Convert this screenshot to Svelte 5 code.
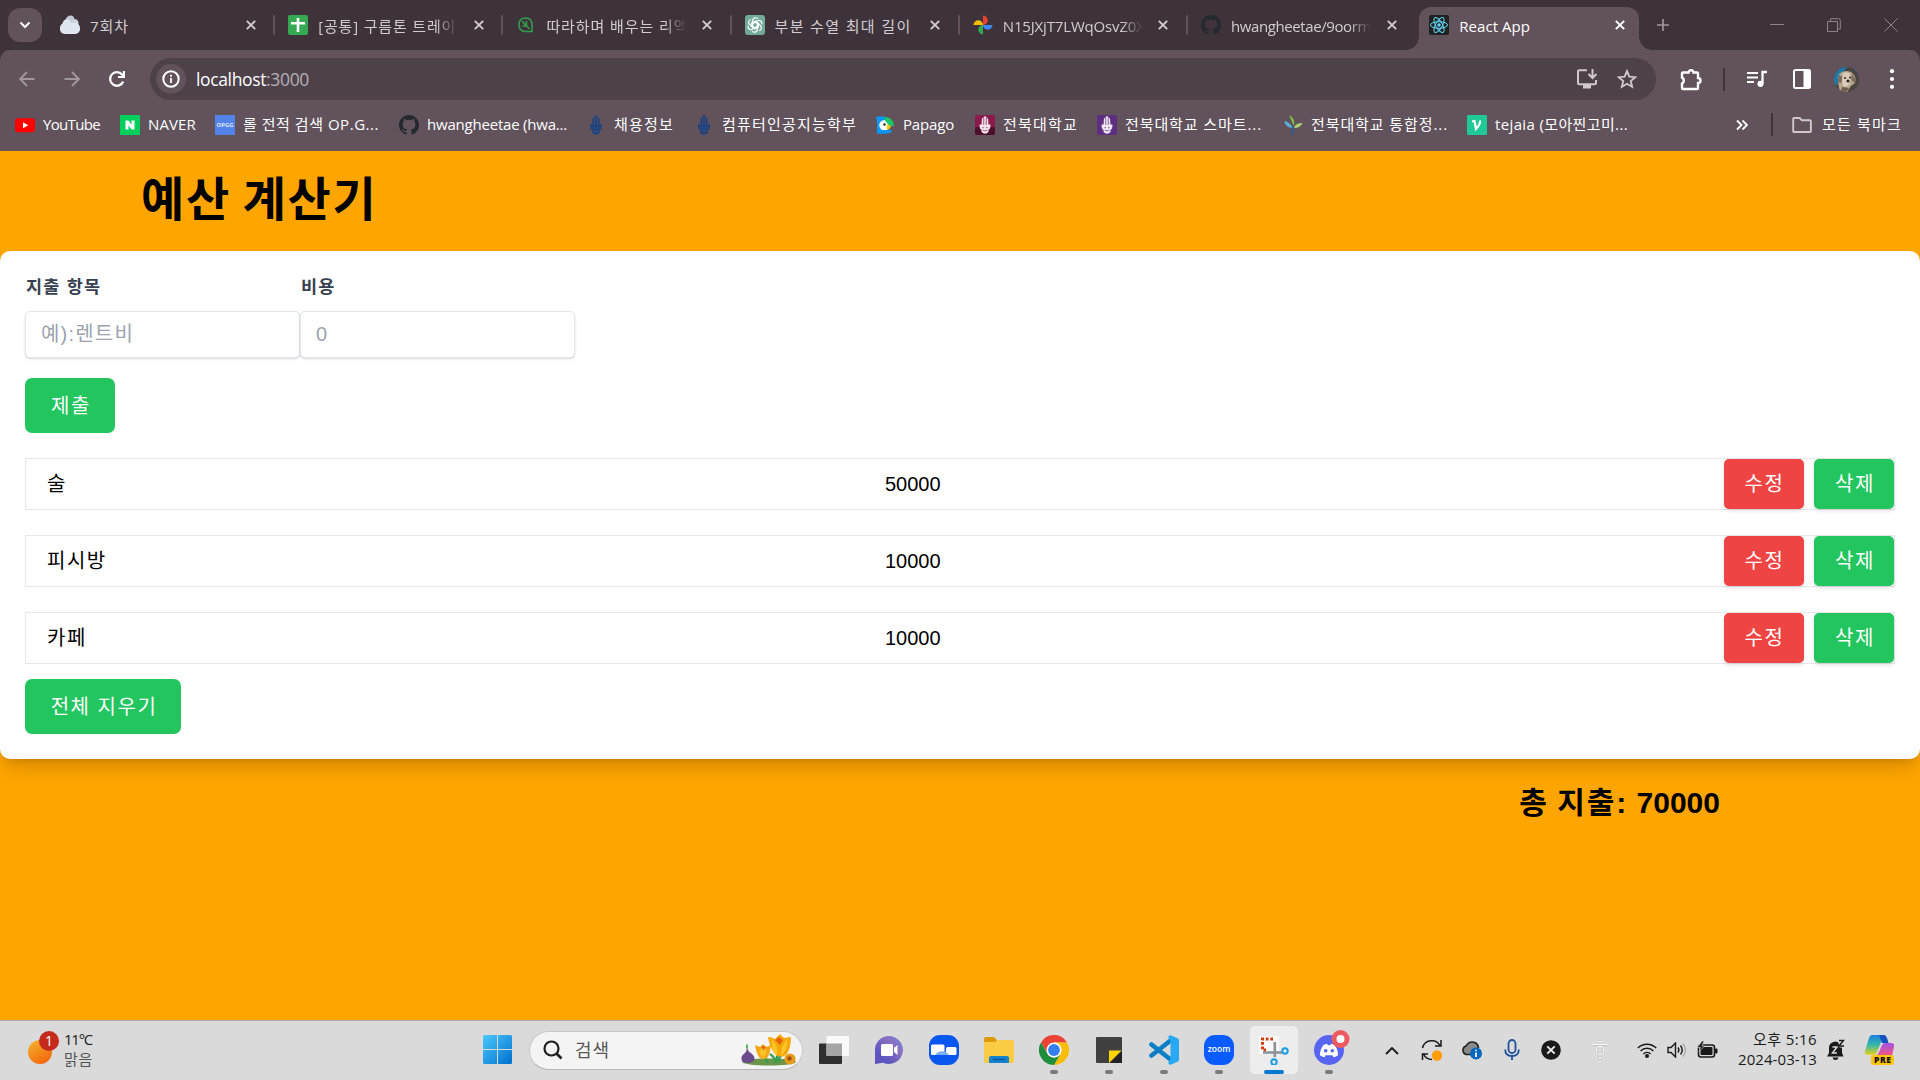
<script>
  // Spreads the tracking of a label so that it fills its slot exactly.
  function fit(node, width) {
    if (!width) return;
    const chars = [...node.textContent.trim()].length;
    if (chars < 2) return;
    const natural = node.getBoundingClientRect().width;
    node.style.letterSpacing = `${(width - natural) / chars}px`;
  }

  const tabs = [
    { icon: 'cloud', title: '7회차', w: 39 },
    { icon: 'sheet', title: '[공통] 구름톤 트레이', w: 138, fade: true },
    { icon: 'leaf', title: '따라하며 배우는 리액', w: 142, fade: true },
    { icon: 'gpt', title: '부분 수열 최대 길이', w: 137 },
    { icon: 'photos', title: 'N15JXjT7LWqOsvZ0X', w: 142, fade: true },
    { icon: 'github', title: 'hwangheetae/9oorm', w: 140, fade: true },
    { icon: 'react', title: 'React App', w: 71, active: true }
  ];

  const bookmarks = [
    { icon: 'youtube', label: 'YouTube', w: 57, slot: 105 },
    { icon: 'naver', label: 'NAVER', w: 48, slot: 95 },
    { icon: 'opgg', label: '롤 전적 검색 OP.G...', w: 136, slot: 184 },
    { icon: 'github', label: 'hwangheetae (hwa...', w: 140, slot: 187 },
    { icon: 'crest', label: '채용정보', w: 60, slot: 108 },
    { icon: 'crest', label: '컴퓨터인공지능학부', w: 135, slot: 181 },
    { icon: 'papago', label: 'Papago', w: 51, slot: 100 },
    { icon: 'crestRed', label: '전북대학교', w: 75, slot: 122 },
    { icon: 'crestPurple', label: '전북대학교 스마트...', w: 137, slot: 186 },
    { icon: 'sprout', label: '전북대학교 통합정...', w: 137, slot: 184 },
    { icon: 'vel', label: 'tejaia (모아찐고미...', w: 133, slot: 185 }
  ];

  const expenses = [
    { name: '술', cost: 50000 },
    { name: '피시방', cost: 10000 },
    { name: '카페', cost: 10000 }
  ];
  const total = expenses.reduce((sum, e) => sum + e.cost, 0);

  const apps = [
    { icon: 'taskview' },
    { icon: 'chat' },
    { icon: 'meet' },
    { icon: 'folder' },
    { icon: 'chrome', open: true },
    { icon: 'sticky', open: true },
    { icon: 'vscode', open: true },
    { icon: 'zoom', open: true },
    { icon: 'snip', active: true },
    { icon: 'discord', open: true }
  ];
</script>

{#snippet crestShape(color, line)}
  <path fill={color} d="M6.200 10 6.500 3.500Q7 1.800 8.600 1.800V1Q9.300 0 10 .3 10.700 0 11.400 1v.8Q13 1.800 13.500 3.500L13.800 10ZM4 9.500h12v3l-.8.800.4 1.200-1.600.6-.2 2.600q-1.800 2-3.800 2t-3.800-2l-.2-2.600-1.600-.6.4-1.200-.8-.8Z" />
  <path d="M8.600 2v8M11.400 2v8M7 13h2M11 13h2M7.500 15.800q2.500 1.600 5 0" fill="none" stroke={line} stroke-width=".8" />
{/snippet}

{#snippet icon(name)}
  {#if name === 'cloud'}
    <svg width="20" height="20" viewBox="0 0 20 20"><path fill="#cfd6dd" d="M4 11a4 4 0 0 1 1-6 5 5 0 0 1 9-1A4 4 0 0 1 18 10Z" /><circle cx="10.500" cy="4.200" r="3.800" fill="#c3ccd4" /><rect x="0" y="8" width="20" height="11" rx="4.700" fill="#dfe6ee" /><circle cx="7" cy="9" r="4.500" fill="#dfe6ee" /></svg>
  {:else if name === 'sheet'}
    <svg width="20" height="20" viewBox="0 0 20 20"><rect width="20" height="20" rx="2" fill="#34a853" /><path d="M10 3v14M3 8.300h14" stroke="#fff" stroke-width="2.600" /></svg>
  {:else if name === 'leaf'}
    <svg width="20" height="20" viewBox="0 0 20 20" fill="none" stroke="#31a24c" stroke-width="1.500"><path d="M9.500 3Q16 3 16 10v6.500H9.500Q3 16.500 3 9.800 3 3 9.500 3Z" /><path d="M6 6l7.500 8M10.500 6v5M6.500 11h4" /></svg>
  {:else if name === 'gpt'}
    <svg width="20" height="20" viewBox="0 0 20 20"><rect width="20" height="20" rx="3" fill="#74aa9c" /><g fill="none" stroke="#fff" stroke-width="1.200">{#each [0, 60, 120, 180, 240, 300] as a}<path transform="rotate({a} 10 10)" d="M10 7.300 13.200 9.100V13M7.700 8.600V5.400A2.900 2.900 0 0 1 12.800 3.800" />{/each}</g></svg>
  {:else if name === 'photos'}
    <svg width="20" height="20" viewBox="0 0 20 20"><path fill="#ea4335" d="M10 .5a4.700 4.700 0 0 1 0 9.500Z" /><path fill="#4285f4" d="M19.500 10a4.700 4.700 0 0 1-9.500 0Z" /><path fill="#34a853" d="M10 19.500a4.700 4.700 0 0 1 0-9.500Z" /><path fill="#fbbc04" d="M.5 10a4.700 4.700 0 0 1 9.500 0Z" /></svg>
  {:else if name === 'github'}
    <svg width="20" height="20" viewBox="0 0 16 16"><path fill="#24292f" d="M8 0C3.580 0 0 3.580 0 8c0 3.540 2.290 6.530 5.470 7.590.4.070.55-.17.55-.38 0-.19-.01-.82-.01-1.490-2.010.37-2.530-.49-2.690-.94-.09-.23-.48-.94-.82-1.130-.28-.15-.68-.52-.01-.53.63-.01 1.080.58 1.230.82.72 1.210 1.870.87 2.330.66.070-.52.280-.87.510-1.070-1.780-.2-3.640-.89-3.640-3.950 0-.87.310-1.590.82-2.150-.08-.2-.36-1.020.08-2.120 0 0 .67-.21 2.200.82a7.600 7.600 0 0 1 4 0c1.530-1.040 2.200-.82 2.200-.82.440 1.100.160 1.920.080 2.120.510.560.820 1.270.820 2.150 0 3.070-1.870 3.750-3.650 3.950.290.250.540.730.540 1.480 0 1.070-.01 1.930-.01 2.200 0 .210.150.460.550.380A8 8 0 0 0 8 0Z" /></svg>
  {:else if name === 'react'}
    <svg width="20" height="20" viewBox="0 0 20 20"><rect width="20" height="20" rx="2" fill="#222" /><g fill="none" stroke="#61dafb"><ellipse cx="10" cy="10" rx="8.500" ry="3.300" /><ellipse cx="10" cy="10" rx="8.500" ry="3.300" transform="rotate(60 10 10)" /><ellipse cx="10" cy="10" rx="8.500" ry="3.300" transform="rotate(120 10 10)" /></g><circle cx="10" cy="10" r="1.700" fill="#61dafb" /></svg>
  {:else if name === 'youtube'}
    <svg width="20" height="20" viewBox="0 0 20 20"><rect y="3.300" width="20" height="14" rx="3" fill="#f00" /><path fill="#fff" d="m8 7.300 5.200 3L8 13.300Z" /></svg>
  {:else if name === 'naver'}
    <svg width="20" height="20" viewBox="0 0 20 20"><rect width="20" height="20" fill="#03cf5d" /><path fill="#fff" d="M5.500 5.500h3l3 4.200V5.500h3v9h-3l-3-4.200v4.200h-3Z" /></svg>
  {:else if name === 'opgg'}
    <span class="opgg">OPGG</span>
  {:else if name === 'crest'}
    <svg width="20" height="20" viewBox="0 0 20 20">{@render crestShape('#1d4480', '#61525c')}</svg>
  {:else if name === 'crestRed'}
    <svg width="20" height="20" viewBox="0 0 20 20"><rect width="20" height="20" rx="2" fill="#8a1a4b" /><rect y="12" width="20" height="8" rx="2" fill="#4d0f2c" /><g transform="translate(1 1) scale(.9)">{@render crestShape('#f5e6ee', '#8a1a4b')}</g></svg>
  {:else if name === 'crestPurple'}
    <svg width="20" height="20" viewBox="0 0 20 20"><rect width="20" height="20" rx="2" fill="#5d2f80" /><g transform="translate(1 1) scale(.9)">{@render crestShape('#f0e8f5', '#5d2f80')}</g></svg>
  {:else if name === 'papago'}
    <svg width="20" height="20" viewBox="0 0 20 20"><path fill="#0a97f5" d="M1 1.500h8l2 1v16H2V6Z" /><path fill="#1fc76a" d="M9 2q9.500 0 10 9h-7Z" /><path fill="#fff" d="M9.500 5a5 5 0 0 0 0 10.500q5 0 4-5.500Z" /><path fill="#ffc400" d="m12 9.500 4 1.500q-.5 3-4 4Z" /><path fill="#0a97f5" d="M3 15h9q4-1 5 1-1 2.500-6 2.500H2Z" /><circle cx="9.500" cy="9.500" r="1.200" fill="#222" /></svg>
  {:else if name === 'sprout'}
    <svg width="20" height="20" viewBox="0 0 20 20"><path fill="#7fc241" d="M6 0q7 3.500 4.500 11Q9 6 6 0Z" /><path fill="#a7d36b" d="M19.500 8q-2 5-8.500 5 1-5 8.500-5Z" /><path fill="#58b3d6" d="M1 6q6 1 8.500 7Q3 13 1 6Z" /><path d="M10.200 11 9.500 19.500" stroke="#2a5f9c" stroke-width="1.800" /></svg>
  {:else if name === 'vel'}
    <svg width="20" height="20" viewBox="0 0 20 20"><rect width="20" height="20" rx="1" fill="#20c997" /><path d="M5 6.500 7.500 6 9 14q4.500-4.500 4-8.500" fill="none" stroke="#fff" stroke-width="2.200" /></svg>
  {:else if name === 'taskview'}
    <svg width="30" height="30" viewBox="0 0 30 30"><rect x="0" y="8.500" width="23" height="20.500" rx="1" fill="#2f2f2f" /><rect x="7.500" y="1" width="22.500" height="20" rx="1" fill="#fafafa" /><path fill="#a5a5a5" d="M7.500 8.500H23V21H7.500Z" /></svg>
  {:else if name === 'chat'}
    <svg width="30" height="30" viewBox="0 0 30 30"><defs><linearGradient id="chatg" x1="1" y1="0" x2="0" y2="1"><stop stop-color="#6f86dc" /><stop offset=".35" stop-color="#8b6fc0" /><stop offset=".7" stop-color="#5f58c0" /><stop offset="1" stop-color="#5b50b8" /></linearGradient></defs><path fill="url(#chatg)" d="M15 1a14 14 0 1 1-6 26.700L1 29V15A14 14 0 0 1 15 1Z" /><rect x="7" y="9" width="12" height="12" rx="1.500" fill="#fff" /><path fill="#fff" d="m20 13 3.500-3v10L20 17Z" /></svg>
  {:else if name === 'meet'}
    <svg width="30" height="30" viewBox="0 0 30 30"><rect width="30" height="30" rx="11" fill="#0a56f0" /><rect x="2" y="9.500" width="13.500" height="10.500" rx="1.500" fill="#fff" /><rect x="17" y="12" width="10.500" height="8" rx="1.500" fill="#fff" /><path fill="#7db0f5" d="M6 20a8 7.500 0 0 1 14 0Z" /></svg>
  {:else if name === 'folder'}
    <svg width="30" height="30" viewBox="0 0 30 30"><path fill="#dd9b0c" d="M0 4q0-2 2-2h8l3 3v5H0Z" /><path fill="#fccb45" d="M0 7h11l3-2h14q2 0 2 2v19q0 2-2 2H2q-2 0-2-2Z" /><path fill="#1683d0" d="M5 28v-5q0-2 2-2h16q2 0 2 2v5Z" /><path d="M9 24.500h12" stroke="#0b5596" stroke-width="1.400" /></svg>
  {:else if name === 'chrome'}
    <svg width="30" height="30" viewBox="0 0 30 30"><path fill="#ea4335" d="M2 7.500a15 15 0 0 1 26 0H15L9 19Z" /><path fill="#fbbc04" d="M28 7.500A15 15 0 0 1 15 30l6.500-11.300A7.500 7.500 0 0 0 15 7.500Z" /><path fill="#1e8e3e" d="M15 30A15 15 0 0 1 2 7.500l6.500 11.300A7.500 7.500 0 0 0 21.500 18.800Z" /><circle cx="15" cy="15" r="7.500" fill="#fff" /><circle cx="15" cy="15" r="5.900" fill="#347fee" /></svg>
  {:else if name === 'sticky'}
    <svg width="30" height="30" viewBox="0 0 30 30"><rect x="2" y="2" width="26" height="26" rx="1" fill="#404040" /><path fill="#ffd500" d="M15 28V15.500h12.500Z" /><path fill="#222" d="M28 16v12H16Z" /></svg>
  {:else if name === 'vscode'}
    <svg width="30" height="30" viewBox="0 0 30 30"><path d="m2.500 9.500 19 15M2.500 20.500l19-15" stroke="#0b7fc6" stroke-width="4.600" stroke-linecap="round" /><path fill="#29a9f2" d="m21 0 7.500 3.200q1.500.7 1.500 2.300v19q0 1.600-1.500 2.300L21 30l-2-2 2.500-4V6L19 2Z" /></svg>
  {:else if name === 'zoom'}
    <span class="zoom-app">zoom</span>
  {:else if name === 'snip'}
    <svg width="30" height="30" viewBox="0 0 30 30"><rect x="0" y="1" width="20" height="18" rx="1" fill="#fafafa" /><path d="M14 4H3.500v11H7" fill="none" stroke="#d63a0b" stroke-width="3" stroke-dasharray="2.700 1.800" /><path d="M15.800 7v15M4 17.500h19" stroke="#8b9199" stroke-width="2.600" /><g fill="none" stroke="#1b9de2" stroke-width="2"><circle cx="26" cy="16" r="2.700" /><circle cx="15" cy="27" r="2.700" /></g></svg>
  {:else if name === 'discord'}
    <svg class="discord" width="36" height="36" viewBox="0 0 36 36"><circle cx="15" cy="20" r="15" fill="#5865f2" /><path fill="#fff" d="M9.500 15q2-1 3.500-1.200l.8 1.400h2.400l.8-1.400q1.500.2 3.500 1.200 4 5.500 3.500 10.200-2 1.600-4.500 2l-1-1.900h-7l-1 1.900q-2.500-.4-4.500-2Q5.500 20.500 9.500 15Z" /><circle cx="11.700" cy="20.800" r="1.800" fill="#5865f2" /><circle cx="18.300" cy="20.800" r="1.800" fill="#5865f2" /><circle cx="26.500" cy="9" r="9" fill="#ed5a60" /><circle cx="26.500" cy="9" r="4" fill="#fff" /></svg>
  {/if}
{/snippet}

<div class="screen">
  <header class="strip">
    <button class="tab-search" aria-label="탭 검색"><svg width="12" height="8" viewBox="0 0 12 8"><path d="m1.500 1.500 4.500 4.500 4.500-4.500" fill="none" stroke="#fff" stroke-width="2" /></svg></button>
    <nav class="tabs">
      {#each tabs as tab, i}
        <div class="tab" class:active={tab.active} class:plain={i === 5}>
          <span class="fav">{@render icon(tab.icon)}</span>
          <span class="title" class:fade={tab.fade}><span class="text" use:fit={tab.w}>{tab.title}</span></span>
          <svg class="close" width="12" height="12" viewBox="0 0 12 12"><path d="m1.800 1.800 8.400 8.400m0-8.400-8.400 8.400" stroke="currentColor" stroke-width="1.900" /></svg>
        </div>
      {/each}
    </nav>
    <svg class="new-tab" width="14" height="14" viewBox="0 0 14 14"><path d="M7 1v12M1 7h12" stroke="#a0969c" stroke-width="1.700" /></svg>
    <div class="window">
      <svg width="14" height="14" viewBox="0 0 14 14"><path d="M0 6.500h14" stroke="currentColor" /></svg>
      <svg width="14" height="14" viewBox="0 0 14 14"><path d="M.5 3.500h10v10H.5ZM3.500 3V.7h8.200q1.600 0 1.600 1.600V11H11" fill="none" stroke="currentColor" /></svg>
      <svg width="14" height="14" viewBox="0 0 14 14"><path d="m.5.5 13 13m0-13-13 13" stroke="currentColor" /></svg>
    </div>
  </header>

  <div class="chrome">
    <div class="toolbar">
      <div class="cell nav"><svg width="16" height="16" viewBox="0 0 16 16"><path d="M15.500 8H1.500M8 1 1.200 8 8 15" fill="none" stroke="#a0969c" stroke-width="1.900" /></svg></div>
      <div class="cell nav"><svg width="16" height="16" viewBox="0 0 16 16"><path d="M.5 8h14M8 1l6.800 7L8 15" fill="none" stroke="#a0969c" stroke-width="1.900" /></svg></div>
      <div class="cell nav last"><svg width="18" height="18" viewBox="0 0 18 18"><path d="M15.200 11.500A6.800 6.800 0 1 1 14 4.500L15.500 6" fill="none" stroke="#fff" stroke-width="2.300" /><path fill="#fff" d="M17 1v7h-7V6h4.800V1Z" /></svg></div>
      <div class="omnibox">
        <span class="info"><svg width="18" height="18" viewBox="0 0 18 18"><circle cx="9" cy="9" r="7.700" fill="none" stroke="#fff" stroke-width="2" /><path d="M9 8v5M9 4.700v2" stroke="#fff" stroke-width="1.800" /></svg></span>
        <span class="url"><span class="text" use:fit={113}>localhost<i>:3000</i></span></span>
        <svg class="install" width="22" height="22" viewBox="0 0 22 22"><path d="M11 2.200H3.200q-1.200 0-1.200 1.200V15q0 1.200 1.200 1.200h15.600q1.200 0 1.200-1.200v-3" fill="none" stroke="#d0c8cd" stroke-width="2" /><path d="M7 17h8v3.500H7Z" fill="#d0c8cd" /><path d="M16.500 1v9m-4-4 4 4 4-4" fill="none" stroke="#d0c8cd" stroke-width="2" /></svg>
        <svg width="20" height="20" viewBox="0 0 24 24"><path d="m12 2.500 2.800 6.700 7.200.6-5.500 4.700 1.700 7L12 17.700l-6.200 3.800 1.700-7L2 9.800l7.200-.6Z" fill="none" stroke="#d0c8cd" stroke-width="2.200" /></svg>
      </div>
      <div class="cell ext"><svg width="22" height="24" viewBox="0 0 22 24"><path d="M3 5.500h5.500a2.500 2.300 0 0 1 5 0H17q1 0 1 1V11a2.500 2.500 0 0 1 0 5v5q0 1-1 1H3q-1 0-1-1v-4.500a3.200 3.200 0 0 0 0-5.800V6.500q0-1 1-1Z" fill="none" stroke="#fff" stroke-width="2.400" /></svg></div>
      <span class="bar"></span>
      <div class="cell"><svg width="20" height="20" viewBox="0 0 20 20"><path d="M0 4h11M0 8.500h11M0 13h7" stroke="#fff" stroke-width="2.200" /><path d="M20 3h-4.500v11" fill="none" stroke="#fff" stroke-width="2.300" /><circle cx="13.500" cy="14.800" r="3.100" fill="#fff" /></svg></div>
      <div class="cell panel"><svg width="18" height="20" viewBox="0 0 18 20"><rect x="1" y="1" width="16" height="18" rx="1.500" fill="none" stroke="#fff" stroke-width="2" /><path fill="#fff" d="M10.500 1H17v18h-6.500Z" /></svg></div>
      <div class="cell"><svg width="25" height="25" viewBox="0 0 25 25"><defs><clipPath id="av"><circle cx="12.500" cy="12.500" r="12.500" /></clipPath></defs><g clip-path="url(#av)"><path fill="#4a4540" d="M0 0h25v25H0Z" /><path fill="#1e78a8" d="M0 0h13L6 9 3 18H0Z" /><path fill="#1d4f70" d="m17 0 8 9V0Z" /><path fill="#b8a58e" d="M5 7q5-5 12-2 6 4 4 11l-4 3-4 6H6Q3 15 5 7Z" /><path fill="#7d6a58" d="m5 8 4 2-2 6-3-1ZM18 7q4 4 3 9l-4-3Z" /><path fill="#d9ccb9" d="M9 6q4-2 7 1l1 5-2 6q-3 3-6 1l-1-7Z" /><path fill="#6d5c4d" d="m8 20 7 1-3 4H7Z" /><circle cx="14" cy="14" r="1.600" fill="#2a2220" /><circle cx="11" cy="11" r="1" fill="#2a2220" /><circle cx="16" cy="10.500" r="1" fill="#2a2220" /></g></svg></div>
      <div class="cell dots"><svg width="6" height="20" viewBox="0 0 6 20" fill="#fff"><circle cx="3" cy="2.200" r="2.100" /><circle cx="3" cy="10" r="2.100" /><circle cx="3" cy="17.800" r="2.100" /></svg></div>
    </div>

    <div class="bookmarks">
      {#each bookmarks as b}
        <a class="bookmark" href="#top" style:width="{b.slot}px">{@render icon(b.icon)}<span class="text" use:fit={b.w}>{b.label}</span></a>
      {/each}
      <div class="rest">
        <svg width="12" height="12" viewBox="0 0 12 12"><path d="m1 1.500 4.500 4.500L1 10.500M6.500 1.500 11 6l-4.500 4.500" fill="none" stroke="#fff" stroke-width="1.900" /></svg>
        <span class="bar"></span>
        <svg class="all" width="20" height="16" viewBox="0 0 20 16"><path d="M2.200 1h5.500l2.200 2.300h8q1 0 1 1V14q0 1-1 1H2.200q-1 0-1-1V2q0-1 1-1Z" fill="none" stroke="#d0c8cd" stroke-width="1.900" /></svg>
        <span class="text" use:fit={80}>모든 북마크</span>
      </div>
    </div>
  </div>

  <main class="page" id="top">
    <h1>예산 계산기</h1>
    <section class="card">
      <form>
        <div class="fields">
          <label><span>지출 항목</span><input type="text" placeholder="예):렌트비" /></label>
          <label><span>비용</span><input type="text" placeholder="0" /></label>
        </div>
        <button type="button" class="primary">제출</button>
      </form>
      <ul>
        {#each expenses as e}
          <li>
            <span class="name">{e.name}</span>
            <span class="cost">{e.cost}</span>
            <span class="actions"><button class="edit">수정</button><button class="remove">삭제</button></span>
          </li>
        {/each}
      </ul>
      <button class="primary clear">전체 지우기</button>
    </section>
    <p class="total">총 지출: <b>{total}</b></p>
  </main>

  <footer class="taskbar">
    <div class="weather">
      <svg width="34" height="34" viewBox="0 0 34 34"><defs><linearGradient id="sun" x1="0" y1="0" x2=".6" y2="1"><stop stop-color="#f2b72f" /><stop offset="1" stop-color="#f4690c" /></linearGradient></defs><circle cx="12" cy="21" r="12" fill="url(#sun)" /><circle cx="21" cy="10" r="10" fill="#c42b1c" /><text x="21" y="15" text-anchor="middle" font-size="14" fill="#fff">1</text></svg>
      <div><span class="text" use:fit={28}>11°C</span><span class="text sub" use:fit={29}>맑음</span></div>
    </div>
    <svg class="start" width="30" height="30" viewBox="0 0 30 30"><defs><linearGradient id="win" x1="0" y1="0" x2="1" y2="1"><stop stop-color="#4cc9fb" /><stop offset="1" stop-color="#0070cf" /></linearGradient></defs><path fill="url(#win)" d="M1.500 0H14v14H0V1.500Q0 0 1.500 0ZM15 0h12.500Q29 0 29 1.500V14H15ZM0 15h14v14H1.500Q0 29 0 27.500ZM15 15h14v12.500q0 1.500-1.500 1.500H15Z" /></svg>
    <div class="search">
      <svg width="20" height="20" viewBox="0 0 20 20"><circle cx="8.500" cy="8.500" r="7" fill="none" stroke="#1f1f1f" stroke-width="2.200" /><path d="m13.500 13.500 5 5" stroke="#1f1f1f" stroke-width="2.600" /></svg>
      <span class="text" use:fit={35}>검색</span>
      <svg class="flowers" width="56" height="32" viewBox="0 0 56 32"><ellipse cx="28" cy="28" rx="27" ry="3.500" fill="#6b9548" /><path d="M22 17q1 6 5 12M38 17l-4 12M29 20q5 3 5 9M47 14q-8 6-10 14" stroke="#35a04e" stroke-width="2.400" fill="none" /><path fill="#6a4a8c" d="M6 13q1 5 4 6 5 4 3 8-6 4-12 0-2-5 3-8 2-2 2-6Z" /><path d="M6 10.500v4" stroke="#4caf50" stroke-width="1.800" /><path fill="#f5a511" d="m14 11 5 2 3-3 3 3 5-2q-1 9-4 13-5 3-8-1-3-5-4-12Z" /><path fill="#f9c22b" d="m22 11 4 7-4 7-4-7Z" /><path fill="#e8620c" d="m20 13 2-1.500 3 1.500-2.500 3Z" /><path fill="#f5a80a" d="M27 3q4 0 7 2l5-5 4 4 7-1q0 12-5 18-6 4-11-1-6-8-7-17Z" /><path fill="#ffc426" d="m31 5 5 8v9q-6-4-5-17ZM46 5l-5 8-1 9q7-6 6-17Z" /><path fill="#e8620c" d="m34 6 4-3 4 3-3 5Z" /><circle cx="49" cy="25" r="5.500" fill="#e99a19" /><circle cx="48.500" cy="24.500" r="2.200" fill="#9c5410" /></svg>
    </div>
    <div class="apps">
      {#each apps as app}
        <div class="app" class:on={app.active} class:open={app.open}>{@render icon(app.icon)}</div>
      {/each}
    </div>
    <div class="tray">
      <svg width="14" height="9" viewBox="0 0 14 9"><path d="m1 8 6-6 6 6" fill="none" stroke="#1a1a1a" stroke-width="1.900" /></svg>
      <svg width="22" height="22" viewBox="0 0 22 22"><path d="M1.500 9A9.500 9.500 0 0 1 19 6.500M20 1v6h-6M11 20.500A9.500 9.500 0 0 1 2.500 15M1.500 21v-6H7" fill="none" stroke="#1a1a1a" stroke-width="1.500" /><circle cx="16" cy="16.500" r="5.200" fill="#ff9d0a" /></svg>
      <svg width="22" height="20" viewBox="0 0 22 20"><path d="M5 14.500a4.500 4.500 0 0 1 0-8.500Q8 1 13 2.300q4 1.200 4.500 5.200L10 14.500Z" fill="#8a8a8a" stroke="#222" stroke-width="1.600" /><circle cx="15" cy="13.500" r="6" fill="#0067c0" /><path d="M15 12.500v4.500M15 9.700v1.600" stroke="#fff" stroke-width="1.700" /></svg>
      <svg width="16" height="22" viewBox="0 0 16 22"><rect x="4.500" y="1" width="7" height="13" rx="3.500" fill="none" stroke="#20529c" stroke-width="1.800" /><path d="M1.200 10.500q0 6.500 6.800 6.500t6.800-6.500M8 17v4" fill="none" stroke="#20529c" stroke-width="1.800" /></svg>
      <svg width="20" height="20" viewBox="0 0 20 20"><circle cx="10" cy="10" r="9.800" fill="#1a1a1a" /><path d="m6.300 6.300 7.400 7.400m0-7.400-7.400 7.400" stroke="#eee" stroke-width="1.900" /></svg>
      <svg width="18" height="20" viewBox="0 0 18 20"><g fill="none" stroke="#a9a9a9" stroke-width="2.200"><path d="M6.500 1.500h5M1 4.300h16" /><circle cx="9" cy="10.500" r="4" /></g><g fill="none" stroke="#fafafa" stroke-width="1.500"><path d="M6.500 1.500h5M1 4.300h16" /><circle cx="9" cy="10.500" r="4" /></g><circle cx="9" cy="18" r="1.700" fill="#fff" stroke="#aaa" stroke-width=".6" /></svg>
      <svg width="20" height="16" viewBox="0 0 20 16"><g fill="none" stroke="#1a1a1a" stroke-width="1.500"><path d="M.8 6a13 13 0 0 1 18.400 0M3.600 9a9 9 0 0 1 12.800 0M6.400 12a5.200 5.200 0 0 1 7.200 0" /></g><circle cx="10" cy="14" r="2" fill="#1a1a1a" /></svg>
      <svg width="20" height="16" viewBox="0 0 20 16"><path d="M1 5.500h3L8.500 1v14L4 10.500H1Z" fill="none" stroke="#1a1a1a" stroke-width="1.400" /><path d="M11 5.500q1.800 2.500 0 5M13.500 3.500q3.500 4.500 0 9" fill="none" stroke="#1a1a1a" stroke-width="1.400" /><path d="M16 1.500q5 6.500 0 13" fill="none" stroke="#aaa" stroke-width="1.400" /></svg>
      <svg width="21" height="18" viewBox="0 0 21 18"><rect x="1.500" y="4" width="16" height="12" rx="2.500" fill="none" stroke="#1a1a1a" stroke-width="1.600" /><rect x="3.500" y="6" width="12" height="8" rx="1" fill="#1a1a1a" /><path d="M18.500 8h1.500v4h-1.500Z" fill="#1a1a1a" stroke="#1a1a1a" /><path d="M5 0 .5 6.500h3L2 11l5.500-6H4.800L7 0Z" fill="#1a1a1a" stroke="#dadada" stroke-width=".6" /></svg>
      <div class="clock"><span class="text" use:fit={64}>오후 5:16</span><span class="text" use:fit={79}>2024-03-13</span></div>
      <svg width="18" height="22" viewBox="0 0 18 22"><path fill="#1a1a1a" d="M2 9.500Q2 3 8.500 2.500 15 3 15 9.500v4.500l1.500 3.500H0L2 14ZM5.500 18.500h6q-.5 2.500-3 2.500t-3-2.500Z" /><path fill="#dadada" d="M10.500 0H18v8.500h-5.500Z" /><path d="M5.500 8h4.500l-4.500 6H10" fill="none" stroke="#dadada" stroke-width="1.500" /><path d="M12 1.500h4.500L12 7h5" fill="none" stroke="#1a1a1a" stroke-width="1.500" /></svg>
      <svg class="copilot" width="30" height="30" viewBox="0 0 30 30"><defs><linearGradient id="cpa" x1="0" y1="0" x2="0" y2="1"><stop stop-color="#1a7fe0" /><stop offset=".5" stop-color="#35b8a8" /><stop offset="1" stop-color="#e8d21c" /></linearGradient><linearGradient id="cpb" x1="0" y1="0" x2="0" y2="1"><stop stop-color="#a252e6" /><stop offset="1" stop-color="#f5587c" /></linearGradient></defs><path fill="url(#cpa)" d="M7 0h12l-7 17q-1 3-4 3H3q-4 0-3-4L4 3q1-3 3-3Z" /><path fill="#1552bf" d="M14 0h5q2 0 3 3l1.500 5H17Z" /><path fill="url(#cpb)" d="M20 8h6q4 0 3 4l-2 9H10q3-1 4-4l3-7q1-2 3-2Z" /><rect x="6" y="20" width="23" height="10" rx="3" fill="#ffc50a" /><text x="17.500" y="28" text-anchor="middle" font-size="8.500" font-weight="800" fill="#111" textLength="17">PRE</text></svg>
    </div>
  </footer>
</div>

<style>
  :global(body) { margin: 0; overflow: hidden; background: #ffa500; }
  .screen { width: 1920px; height: 1080px; display: flex; flex-direction: column; overflow: hidden; font-family: 'Open Sans', 'Noto Sans CJK KR', sans-serif; }
  .screen :global(svg) { display: block; flex: none; }
  .text { display: inline-block; white-space: nowrap; }
  button { border: 0; padding: 0; font: inherit; color: inherit; letter-spacing: inherit; }

  .strip { height: 50px; flex: none; display: flex; align-items: center; background: #3e333a; padding-left: 8px; box-sizing: border-box; }
  .tab-search { width: 34px; height: 34px; border-radius: 12px; background: #61525c; display: grid; place-items: center; }
  .tabs { display: flex; margin-left: 5px; height: 50px; }
  .tab { position: relative; box-sizing: border-box; width: 228.200px; height: 50px; display: flex; align-items: center; padding: 0 18.500px 0 13px; color: #d3ccd0; font-size: 15px; }
  .tab:not(.active, .plain)::after { content: ''; position: absolute; right: 0; top: 15px; width: 2px; height: 20px; background: #61525c; border-radius: 1px; }
  .fav { width: 20px; flex: none; }
  .title { width: 143px; margin: 2px auto 0 10px; line-height: 24px; }
  .title.fade { -webkit-mask-image: linear-gradient(90deg, #000 118px, transparent 140px); mask-image: linear-gradient(90deg, #000 118px, transparent 140px); }
  .close { color: #d3ccd0; }
  .tab.active { color: #fff; }
  .tab.active .close { color: #fff; }
  .tab.active::before { content: ''; position: absolute; z-index: 0; left: 3px; top: 7px; width: 220px; height: 43px; border-radius: 12px 12px 0 0; background: #61525c; }
  .tab.active::after { content: ''; position: absolute; left: -10px; bottom: 0; width: 246px; height: 13px; background: radial-gradient(circle at 0 0, transparent 12.5px, #61525c 13px) left / 13px 13px no-repeat, radial-gradient(circle at 100% 0, transparent 12.5px, #61525c 13px) right / 13px 13px no-repeat; }
  .tab > * { position: relative; z-index: 1; }
  .new-tab { margin-left: 12px; }
  .window { margin-left: auto; display: flex; gap: 43px; padding-right: 22px; color: #8d8389; }

  .chrome { height: 101px; flex: none; background: linear-gradient(#3e333a 0 0) top / 100% 12px no-repeat #61525c; }
  .toolbar { height: 58px; display: flex; align-items: center; background: #61525c; border-radius: 10px 10px 0 0; padding-left: 5px; }
  .cell { width: 45px; display: flex; justify-content: center; flex: none; }
  .cell.nav { width: 44.700px; }
  .cell.nav.last { margin-right: 10.900px; }
  .omnibox { width: 1506px; height: 42px; box-sizing: border-box; border-radius: 21px; background: #4d414a; display: flex; align-items: center; padding: 0 19px 0 6px; flex: none; }
  .info { width: 30px; height: 30px; border-radius: 50%; background: #61525c; display: grid; place-items: center; }
  .url { margin: 0 auto 0 10px; font-size: 17.500px; color: #fff; line-height: 24px; }
  .url i { font-style: normal; color: #b8afb5; }
  .install { margin-right: 19px; }
  .cell.ext { margin-left: 12px; width: 46px; }
  .bar { width: 2px; height: 23px; background: #3e333a; margin: 0 10px 0 9px; }
  .cell.panel { width: 44px; }
  .dots { width: 46px; }
  .bookmarks { height: 27px; background: #61525c; display: flex; align-items: center; padding: 3px 0 13px 15px; color: #fff; font-size: 15px; }
  .bookmark { display: flex; align-items: center; gap: 8px; color: inherit; text-decoration: none; line-height: 22px; flex: none; }
  .bookmark .text, .rest .text { margin-top: -1px; }
  .opgg { width: 20px; height: 20px; background: #5383e8; color: #dbe5fb; font-size: 6px; font-weight: 700; line-height: 20px; text-align: center; flex: none; }
  .rest { margin-left: auto; display: flex; align-items: center; padding-right: 18px; line-height: 22px; }
  .rest .bar { margin: 0 19px 0 23px; }
  .rest .all { margin-right: 10px; }

  .page { flex: 1; background: #ffa500; font-family: 'Liberation Sans', 'Noto Sans CJK KR', sans-serif; color: #000; font-size: 20px; }
  h1 { margin: 0; height: 100px; box-sizing: border-box; padding: 14px 0 0 141px; font-size: 47px; line-height: 70px; letter-spacing: 1.700px; word-spacing: -3px; }
  .card { box-sizing: border-box; height: 508px; background: #fff; border-radius: 10px; padding: 25px; box-shadow: 0 12px 19px -4px rgb(0 0 0 / .16), 0 5px 8px -5px rgb(0 0 0 / .14); }
  .fields { display: flex; }
  label { width: 275px; display: block; color: #374151; font-size: 17.500px; font-weight: 700; letter-spacing: 1.200px; }
  label span { display: block; height: 35px; box-sizing: border-box; padding: 1px 0 0 1px; line-height: 20px; }
  input { display: block; box-sizing: border-box; width: 275px; height: 47px; border: 1px solid #e5e7eb; border-radius: 5px; padding: 0 15px; font: 20px 'Liberation Sans', 'Noto Sans CJK KR', sans-serif; letter-spacing: 1.200px; box-shadow: 0 1px 3px rgb(0 0 0 / .12), 0 1px 2px -1px rgb(0 0 0 / .12); }
  input::placeholder { color: #9ca3af; opacity: 1; }
  .primary { display: block; margin-top: 20px; width: 90px; height: 55px; border-radius: 7px; background: #22c55e; color: #fff; letter-spacing: 1.500px; padding: 0 0 2px 2px; }
  ul { list-style: none; margin: 25px 0 0; padding: 0; display: grid; gap: 25px; }
  li { box-sizing: border-box; height: 52px; border: 1px solid #e5e7eb; display: flex; align-items: center; }
  .name { width: 839px; padding: 0 0 3px 21px; box-sizing: border-box; letter-spacing: 1.500px; }
  .cost { flex: 1; padding-left: 20px; }
  .actions { display: flex; gap: 10px; }
  .actions button { width: 80px; height: 50px; border-radius: 5px; color: #fff; letter-spacing: 1.500px; padding: 0 0 3px 1px; box-shadow: 0 2px 4px rgb(0 0 0 / .12); }
  .edit { background: #ef4444; }
  .actions .remove { background: #22c55e; padding-left: 2px; }
  .clear { width: 156px; margin-top: 15px; }
  .total { margin: 24px 200px 0 0; text-align: right; font-size: 30px; font-weight: 700; line-height: 40px; letter-spacing: 1.800px; word-spacing: -1.500px; }
  .total b { letter-spacing: 0; }

  .taskbar { box-sizing: border-box; height: 60px; flex: none; display: flex; align-items: center; background: #dadada; border-top: 1px solid #a9abb0; color: #1a1a1a; font-size: 15px; padding-bottom: 1px; }
  .weather { width: 483px; box-sizing: border-box; padding: 0 0 4px 28px; display: flex; gap: 2px; align-items: center; }
  .weather div { display: grid; line-height: 20px; padding-top: 1px; justify-items: start; }
  .sub { color: #555; }
  .search { box-sizing: border-box; width: 274px; height: 39px; margin-left: 16px; border: 1px solid #c8c8c8; border-bottom-color: #b5b5b5; border-radius: 20px; background: #f4f4f4; display: flex; align-items: center; padding: 0 5px 0 13px; color: #555; font-size: 18px; }
  .search .text { margin: -3px auto 0 12px; }
  .apps { display: flex; gap: 7px; margin-left: 7px; }
  .app { position: relative; width: 48px; height: 48px; display: grid; place-items: center; border-radius: 5px; }
  .app.on { background: #ededed; }
  .app.open::after, .app.on::after { content: ''; position: absolute; bottom: 0; left: 20px; width: 8px; height: 4px; border-radius: 2px; background: #7a7a7a; }
  .app.on::after { left: 14px; width: 20px; background: #0078d4; }
  .app :global(.discord) { margin: -5px -6px 0 0; }
  .zoom-app { width: 30px; height: 30px; border-radius: 11px; background: #0b5cff; color: #fff; font-size: 8.500px; font-weight: 600; line-height: 27px; text-align: center; }
  .tray { display: grid; flex: 1; grid-template-columns: 40px 40px 40px 40px 38px 59px 36px 24px 36px 92px 38px 50px 1fr; align-items: center; justify-items: center; padding-left: 19px; }
  .clock { display: grid; justify-items: end; justify-self: end; line-height: 20px; padding-bottom: 3px; }
</style>
